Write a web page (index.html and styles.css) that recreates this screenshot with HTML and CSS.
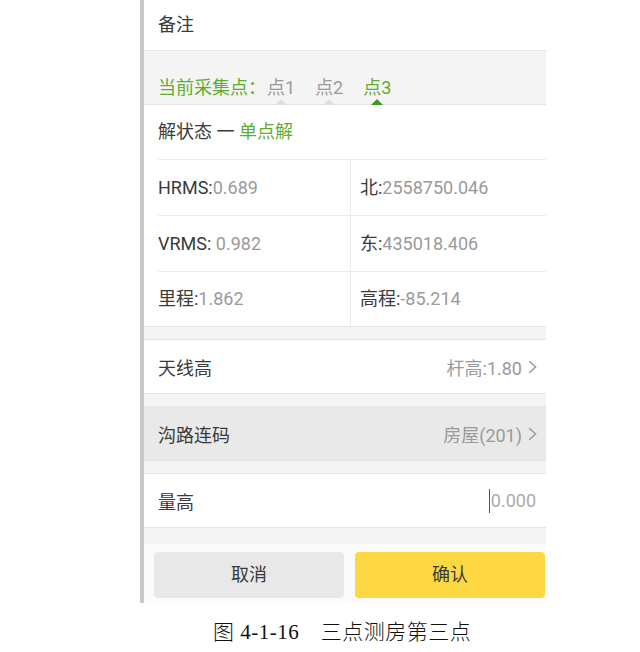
FILE: index.html
```html
<!DOCTYPE html>
<html lang="zh">
<head>
<meta charset="utf-8">
<link rel="stylesheet" href="styles.css">
</head>
<body>
<div class="figure">
  <div class="phone">
    <div class="row remark">备注</div>
    <div class="tabs">
      <span class="tabs-label">当前采集点：</span>
      <span class="tab">点1</span>
      <span class="tab">点2</span>
      <span class="tab active">点3</span>
    </div>
    <div class="info">
      <div class="status">解状态 一 <span class="green">单点解</span></div>
      <div class="grid">
        <div class="cell left"><span class="k">HRMS:</span><span class="v">0.689</span></div>
        <div class="cell right"><span class="k">北:</span><span class="v">2558750.046</span></div>
        <div class="cell left"><span class="k">VRMS:</span><span class="v"> 0.982</span></div>
        <div class="cell right"><span class="k">东:</span><span class="v">435018.406</span></div>
        <div class="cell left last"><span class="k">里程:</span><span class="v">1.862</span></div>
        <div class="cell right last"><span class="k">高程:</span><span class="v">-85.214</span></div>
      </div>
    </div>
    <div class="item">
      <span class="item-label">天线高</span>
      <span class="item-value">杆高:1.80<svg class="chev" width="9" height="14" viewBox="0 0 9 14"><polyline points="1.2,1.2 7.6,7 1.2,12.8" fill="none" stroke="#9a9a9a" stroke-width="1.5"/></svg></span>
    </div>
    <div class="item pressed">
      <span class="item-label">沟路连码</span>
      <span class="item-value">房屋(201)<svg class="chev" width="9" height="14" viewBox="0 0 9 14"><polyline points="1.2,1.2 7.6,7 1.2,12.8" fill="none" stroke="#9a9a9a" stroke-width="1.5"/></svg></span>
    </div>
    <div class="item">
      <span class="item-label">量高</span>
      <span class="item-value input"><span class="caret"></span><span class="placeholder">0.000</span></span>
    </div>
    <div class="spacer"></div>
    <div class="buttons">
      <div class="btn cancel">取消</div>
      <div class="btn ok">确认</div>
    </div>
  </div>
  <div class="caption">图 4-1-16　三点测房第三点</div>
</div>
</body>
</html>
```

FILE: styles.css
```css
html, body {
  margin: 0;
  padding: 0;
  background: #ffffff;
}
body {
  width: 640px;
  height: 652px;
  overflow: hidden;
  font-family: Roboto, "Noto Sans CJK SC", sans-serif;
  color: #333333;
}
.figure {
  padding-left: 140px;
}
.phone {
  width: 402px;
  border-left: 4px solid #c9c9c9;
  background: #f4f4f4;
  font-size: 18px;
}
.row.remark {
  height: 50px;
  line-height: 50px;
  padding-left: 14px;
  background: #ffffff;
  border-bottom: 1px solid #e6e6e6;
  color: #3a3a3a;
}
.tabs {
  height: 54px;
  box-sizing: border-box;
  padding-left: 14px;
  padding-top: 25px;
  border-bottom: 1px solid #e4e4e4;
  display: flex;
  align-items: flex-start;
  line-height: 24px;
}
.tabs-label {
  color: #5eae2d;
  margin-right: 1px;
}
.tab {
  position: relative;
  color: #9b9b9b;
  margin-right: 20px;
  height: 29px;
}
.tab::after {
  content: "";
  position: absolute;
  left: 50%;
  bottom: 0;
  margin-left: -6px;
  border-left: 6px solid transparent;
  border-right: 6px solid transparent;
  border-bottom: 6px solid #dedede;
}
.tab.active {
  color: #5eae2d;
}
.tab.active::after {
  border-bottom-color: #3f9a1c;
}
.info {
  background: #ffffff;
  padding-left: 14px;
  border-bottom: 1px solid #e6e6e6;
}
.status {
  height: 54px;
  line-height: 54px;
  border-bottom: 1px solid #ececec;
  color: #3a3a3a;
}
.green {
  color: #5eae2d;
}
.grid {
  display: grid;
  grid-template-columns: 192px 1fr;
}
.cell {
  height: 55px;
  line-height: 55px;
  border-bottom: 1px solid #ececec;
  white-space: nowrap;
}
.cell.last {
  height: 54px;
  line-height: 54px;
  border-bottom: none;
}
.cell.right {
  border-left: 1px solid #ececec;
  padding-left: 9px;
}
.k {
  color: #3a3a3a;
}
.v {
  color: #9a9a9a;
}
.item {
  margin-top: 12px;
  height: 53px;
  background: #ffffff;
  border-top: 1px solid #e4e4e4;
  border-bottom: 1px solid #e4e4e4;
  display: flex;
  align-items: center;
  justify-content: space-between;
  padding: 0 9px 0 14px;
}
.item.pressed {
  background: #e9e9e9;
  border-top-color: #e9e9e9;
}
.item-label {
  color: #3a3a3a;
}
.item-value {
  color: #9a9a9a;
  display: flex;
  align-items: center;
}
.chev {
  margin-left: 6px;
}
.input {
  padding-right: 1px;
}
.caret {
  width: 1px;
  height: 24px;
  background: #555555;
  margin-right: 1px;
}
.placeholder {
  color: #ababab;
}
.spacer {
  height: 16px;
}
.buttons {
  background: #fbfbfb;
  padding: 8px 1px 5px 10px;
  display: flex;
  gap: 11px;
}
.btn {
  flex: 1;
  height: 46px;
  line-height: 46px;
  text-align: center;
  border-radius: 4px;
  color: #3a3a3a;
}
.cancel {
  background: #e8e8e8;
}
.ok {
  background: #fdd843;
}
.caption {
  margin-top: 17px;
  padding-left: 73px;
  font-family: "Liberation Serif", "Noto Sans CJK SC", serif;
  font-weight: 300;
  font-size: 21px;
  letter-spacing: 0.5px;
  line-height: 24px;
  color: #111111;
}
```
